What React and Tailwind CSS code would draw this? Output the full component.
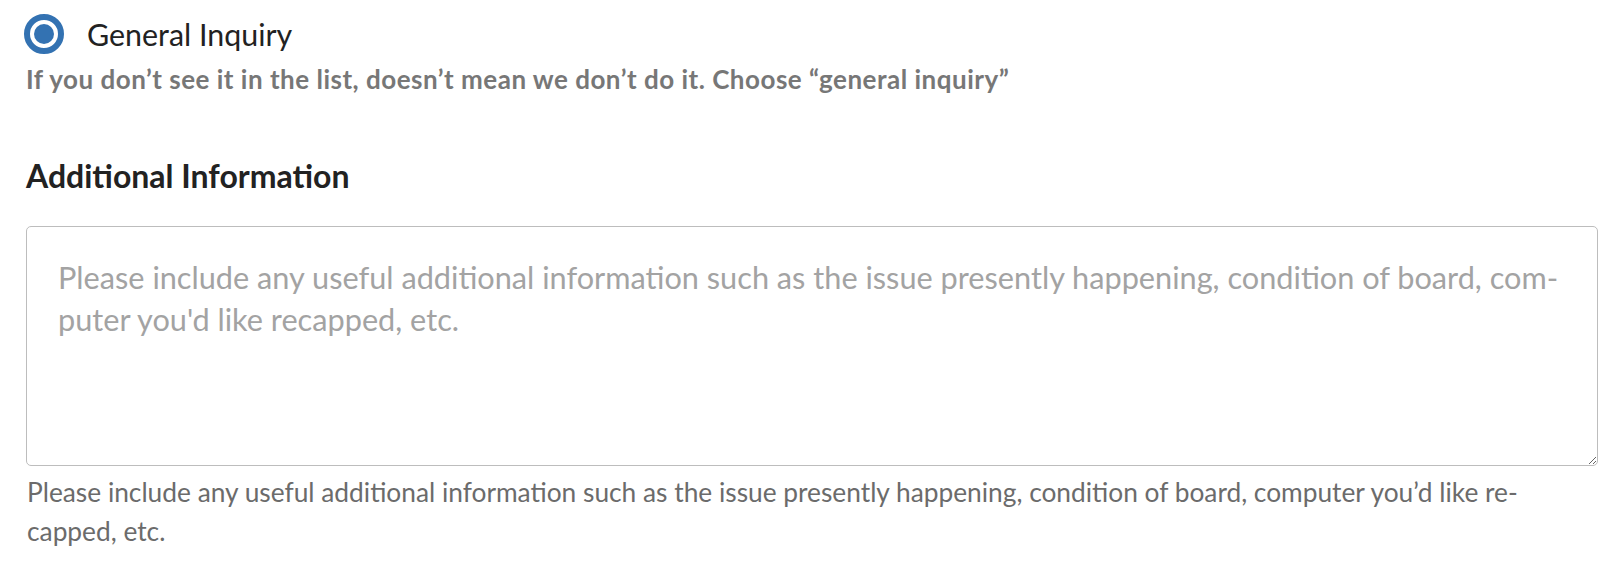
export default function App() {
  return (
    <div className="min-h-[568px] bg-white pl-[26px] pr-[24px] pt-[14px] font-['Lato','Noto_Sans',sans-serif]">
      {/* radio option */}
      <label className="flex items-center">
        <span className="-ml-[2px] flex h-[40px] w-[40px] items-center justify-center rounded-full border-[6px] border-[#3372b2]">
          <span className="h-[20px] w-[20px] rounded-full bg-[#3372b2]"></span>
        </span>
        <span className="ml-[23px] text-[30.4px] leading-[40px] text-[#222]">General Inquiry</span>
      </label>
      <p className="mt-[9px] whitespace-nowrap text-[26px] font-bold leading-[32px] tracking-[0.5px] text-[#777]">
        If you don’t see it in the list, doesn’t mean we don’t do it. Choose “general inquiry”
      </p>

      <h3 className="mt-[61px] text-[32px] font-bold leading-[40px] text-[#222]">Additional Information</h3>

      <textarea
        className="mt-[30px] block h-[240px] w-full overflow-hidden whitespace-pre rounded-[5px] border border-[#bdbdbd] pl-[31px] pr-[31px] pt-[30px] text-[30.7px] leading-[42px] text-[#222] outline-none placeholder:whitespace-pre placeholder:text-[#a3a3a3]"
        placeholder={
          "Please include any useful additional information such as the issue presently happening, condition of board, com-\nputer you'd like recapped, etc."
        }
      ></textarea>
      <p className="mt-[7px] pl-[1px] text-[26.3px] leading-[38.5px] text-[#6b6b6b]">
        <span className="whitespace-nowrap">
          Please include any useful additional information such as the issue presently happening, condition of board, computer you’d like re-
        </span>
        <br />
        capped, etc.
      </p>
    </div>
  );
}
